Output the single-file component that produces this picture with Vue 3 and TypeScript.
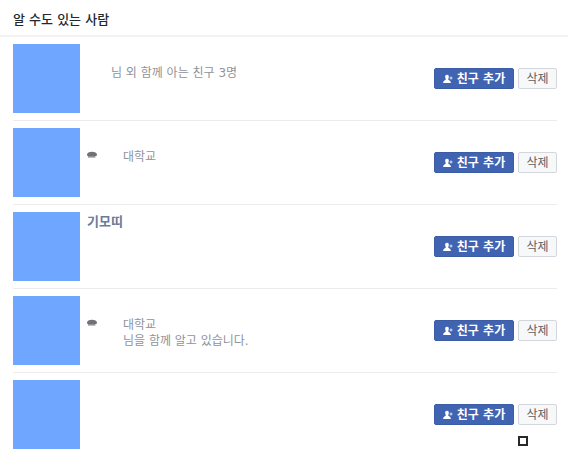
<script setup lang="ts">
import { ref } from 'vue'

type Indent = 'medium' | 'wide'

interface Detail {
  text: string
  indent: Indent
  school?: boolean
}

interface Person {
  id: number
  name: string
  details: Detail[]
}

const people = ref<Person[]>([
  { id: 1, name: '', details: [{ text: '님 외 함께 아는 친구 3명', indent: 'medium' }] },
  { id: 2, name: '', details: [{ text: '대학교', indent: 'wide', school: true }] },
  { id: 3, name: '기모띠', details: [] },
  {
    id: 4,
    name: '',
    details: [
      { text: '대학교', indent: 'wide', school: true },
      { text: '님을 함께 알고 있습니다.', indent: 'wide' },
    ],
  },
  { id: 5, name: '', details: [] },
])

function dismiss(id: number): void {
  people.value = people.value.filter((p) => p.id !== id)
}
</script>

<template>
  <main class="panel">
    <h1 class="title">알 수도 있는 사람</h1>
    <ul class="list">
      <li v-for="(person, index) in people" :key="person.id" class="row">
        <div class="avatar"></div>
        <div class="info">
          <div class="name">
            <a v-if="person.name" href="#">{{ person.name }}</a>
          </div>
          <p v-for="detail in person.details" :key="detail.text" class="detail">
            <span class="lead" :class="detail.indent">
              <svg v-if="detail.school" class="school" viewBox="0 0 10 8" aria-hidden="true">
                <path d="M0 3.8 C.2 1.6 2.2 .8 5 .8 C7.8 .8 9.8 1.6 10 3.8 C10 4.6 9.4 5 8.6 5 H1.2 C.4 5 0 4.6 0 3.8Z" fill="#707276" />
                <path d="M1 5 H8.4 V6.6 H1Z" fill="#909296" />
              </svg>
            </span>
            <span>{{ detail.text }}</span>
          </p>
        </div>
        <div class="actions">
          <button type="button" class="button add">
            <svg class="person" viewBox="0 0 10 10" aria-hidden="true">
              <path d="M4 .8 C5.4 .8 5.9 1.7 5.8 3 C5.7 4.2 5.2 4.8 5.2 5.6 C5.4 6.4 7.8 6.6 8 9 H0 C.2 6.6 2.6 6.4 2.8 5.6 C2.8 4.8 2.3 4.2 2.2 3 C2.1 1.7 2.6 .8 4 .8Z" fill="#fff" />
              <path d="M8 2.5 V5.5 M6.5 4 H9.5" stroke="#dce5f8" stroke-width="1" />
            </svg>
            친구 추가
          </button>
          <button type="button" class="button remove" @click="dismiss(person.id)">삭제</button>
          <span v-if="index === people.length - 1" class="marker" aria-hidden="true"></span>
        </div>
      </li>
    </ul>
  </main>
</template>

<style>
body {
  margin: 0;
  background: #fff;
}
</style>

<style scoped>
.panel {
  padding-right: 12px;
  font-family: 'DejaVu Sans', 'Noto Sans CJK KR', sans-serif;
  font-size: 12px;
  line-height: 16px;
  color: #90939a;
}

.title {
  margin: 0;
  padding: 12px 12px 7px 13px;
  border-bottom: 2px solid #f3f3f4;
  font-size: 13px;
  font-weight: 500;
  line-height: 16px;
  color: #25272b;
}

.list {
  margin: 0;
  padding: 0 11px 0 13px;
  list-style: none;
}

.row {
  display: flex;
  align-items: center;
  gap: 7px;
  padding: 7px 0;
  border-bottom: 1px solid #ececed;
}

.row:last-child {
  border-bottom: 0;
}

.avatar {
  flex: none;
  width: 67px;
  height: 69px;
  background: #6fa6ff;
}

.info {
  flex: 1;
  align-self: stretch;
  min-width: 0;
  padding-top: 2px;
}

.name {
  height: 16px;
  margin-bottom: 3px;
  font-size: 13px;
  font-weight: 700;
}

.name a {
  color: #6b7c99;
  text-decoration: none;
}

.detail {
  display: flex;
  margin: 0;
}

.lead {
  display: flex;
  flex: none;
  align-items: flex-start;
}

.lead.medium {
  width: 24px;
}

.lead.wide {
  width: 36px;
}

.school {
  width: 10px;
  height: 8px;
  margin-top: 2px;
}

.actions {
  position: relative;
  display: flex;
  flex: none;
  gap: 4px;
}

.button {
  display: flex;
  align-items: center;
  justify-content: center;
  box-sizing: border-box;
  height: 21px;
  padding: 0 7px;
  border: 1px solid #3c5da5;
  border-radius: 2px;
  font: inherit;
  white-space: nowrap;
  cursor: pointer;
}

.add {
  gap: 4px;
  width: 80px;
  background: #4064b2;
  color: #fff;
  font-weight: 700;
}

.remove {
  width: 39px;
  border-color: #d3d6db;
  background: #f7f8fa;
  color: #5c6067;
}

.person {
  flex: none;
  width: 10px;
  height: 10px;
}

.marker {
  position: absolute;
  top: 32px;
  right: 29px;
  box-sizing: border-box;
  width: 10px;
  height: 10px;
  border: 2px solid #29292b;
}
</style>
